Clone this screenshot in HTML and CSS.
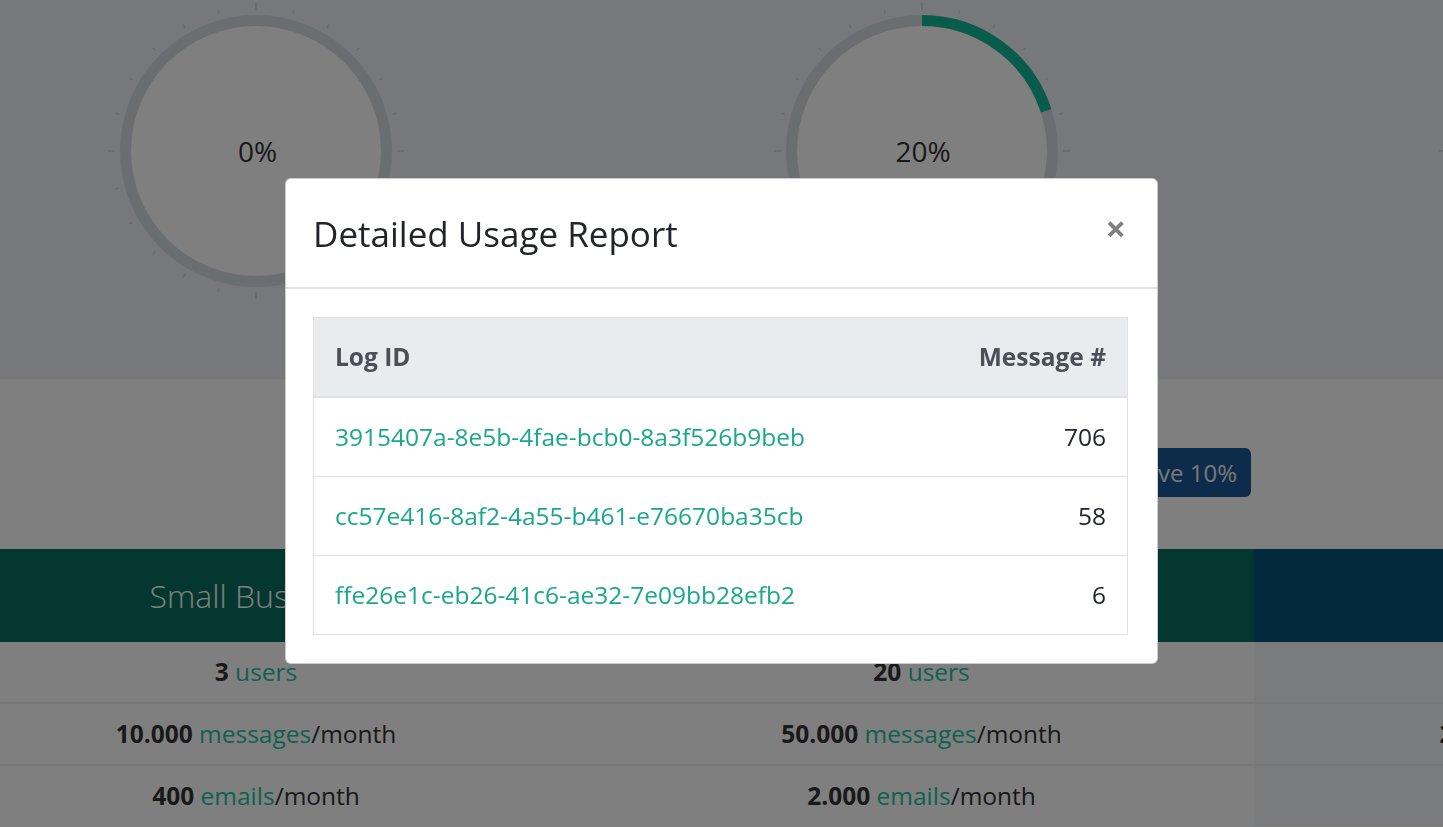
FILE: index.html
```html
<!DOCTYPE html>
<html lang="en">
<head>
<meta charset="utf-8">
<title>Usage</title>
<link rel="stylesheet" href="styles.css">
</head>
<body>
<div class="page">
  <section class="usage">
    <div class="cols">
      <div class="gauge">
        <svg class="gauge-svg" width="302" height="302" viewBox="0 0 302 302">
          <g class="ticks">
            <line class="major" x1="151" y1="3" x2="151" y2="10"/>
            <line x1="151" y1="5" x2="151" y2="9" transform="rotate(15 151 151)"/>
            <line x1="151" y1="5" x2="151" y2="9" transform="rotate(30 151 151)"/>
            <line x1="151" y1="5" x2="151" y2="9" transform="rotate(45 151 151)"/>
            <line x1="151" y1="5" x2="151" y2="9" transform="rotate(60 151 151)"/>
            <line x1="151" y1="5" x2="151" y2="9" transform="rotate(75 151 151)"/>
            <line class="major" x1="151" y1="3" x2="151" y2="10" transform="rotate(90 151 151)"/>
            <line x1="151" y1="5" x2="151" y2="9" transform="rotate(105 151 151)"/>
            <line x1="151" y1="5" x2="151" y2="9" transform="rotate(120 151 151)"/>
            <line x1="151" y1="5" x2="151" y2="9" transform="rotate(135 151 151)"/>
            <line x1="151" y1="5" x2="151" y2="9" transform="rotate(150 151 151)"/>
            <line x1="151" y1="5" x2="151" y2="9" transform="rotate(165 151 151)"/>
            <line class="major" x1="151" y1="3" x2="151" y2="10" transform="rotate(180 151 151)"/>
            <line x1="151" y1="5" x2="151" y2="9" transform="rotate(195 151 151)"/>
            <line x1="151" y1="5" x2="151" y2="9" transform="rotate(210 151 151)"/>
            <line x1="151" y1="5" x2="151" y2="9" transform="rotate(225 151 151)"/>
            <line x1="151" y1="5" x2="151" y2="9" transform="rotate(240 151 151)"/>
            <line x1="151" y1="5" x2="151" y2="9" transform="rotate(255 151 151)"/>
            <line class="major" x1="151" y1="3" x2="151" y2="10" transform="rotate(270 151 151)"/>
            <line x1="151" y1="5" x2="151" y2="9" transform="rotate(285 151 151)"/>
            <line x1="151" y1="5" x2="151" y2="9" transform="rotate(300 151 151)"/>
            <line x1="151" y1="5" x2="151" y2="9" transform="rotate(315 151 151)"/>
            <line x1="151" y1="5" x2="151" y2="9" transform="rotate(330 151 151)"/>
            <line x1="151" y1="5" x2="151" y2="9" transform="rotate(345 151 151)"/>
          </g>
          <circle class="face" cx="151" cy="151" r="125"/>
          <circle class="ring" cx="151" cy="151" r="130.5"/>
        </svg>
        <div class="gauge-value">0%</div>
      </div>
      <div class="gauge">
        <svg class="gauge-svg" width="302" height="302" viewBox="0 0 302 302">
          <g class="ticks">
            <line class="major" x1="151" y1="3" x2="151" y2="10"/>
            <line x1="151" y1="5" x2="151" y2="9" transform="rotate(15 151 151)"/>
            <line x1="151" y1="5" x2="151" y2="9" transform="rotate(30 151 151)"/>
            <line x1="151" y1="5" x2="151" y2="9" transform="rotate(45 151 151)"/>
            <line x1="151" y1="5" x2="151" y2="9" transform="rotate(60 151 151)"/>
            <line x1="151" y1="5" x2="151" y2="9" transform="rotate(75 151 151)"/>
            <line class="major" x1="151" y1="3" x2="151" y2="10" transform="rotate(90 151 151)"/>
            <line x1="151" y1="5" x2="151" y2="9" transform="rotate(105 151 151)"/>
            <line x1="151" y1="5" x2="151" y2="9" transform="rotate(120 151 151)"/>
            <line x1="151" y1="5" x2="151" y2="9" transform="rotate(135 151 151)"/>
            <line x1="151" y1="5" x2="151" y2="9" transform="rotate(150 151 151)"/>
            <line x1="151" y1="5" x2="151" y2="9" transform="rotate(165 151 151)"/>
            <line class="major" x1="151" y1="3" x2="151" y2="10" transform="rotate(180 151 151)"/>
            <line x1="151" y1="5" x2="151" y2="9" transform="rotate(195 151 151)"/>
            <line x1="151" y1="5" x2="151" y2="9" transform="rotate(210 151 151)"/>
            <line x1="151" y1="5" x2="151" y2="9" transform="rotate(225 151 151)"/>
            <line x1="151" y1="5" x2="151" y2="9" transform="rotate(240 151 151)"/>
            <line x1="151" y1="5" x2="151" y2="9" transform="rotate(255 151 151)"/>
            <line class="major" x1="151" y1="3" x2="151" y2="10" transform="rotate(270 151 151)"/>
            <line x1="151" y1="5" x2="151" y2="9" transform="rotate(285 151 151)"/>
            <line x1="151" y1="5" x2="151" y2="9" transform="rotate(300 151 151)"/>
            <line x1="151" y1="5" x2="151" y2="9" transform="rotate(315 151 151)"/>
            <line x1="151" y1="5" x2="151" y2="9" transform="rotate(330 151 151)"/>
            <line x1="151" y1="5" x2="151" y2="9" transform="rotate(345 151 151)"/>
          </g>
          <circle class="face" cx="151" cy="151" r="125"/>
          <circle class="ring" cx="151" cy="151" r="130.5"/>
          <circle class="arc" cx="151" cy="151" r="130.5" stroke-dasharray="164 820" transform="rotate(-90 151 151)"/>
        </svg>
        <div class="gauge-value">20%</div>
      </div>
      <div class="gauge">
        <svg class="gauge-svg" width="302" height="302" viewBox="0 0 302 302">
          <g class="ticks">
            <line class="major" x1="151" y1="3" x2="151" y2="10" transform="rotate(270 151 151)"/>
          </g>
          <circle class="face" cx="151" cy="151" r="125"/>
          <circle class="ring" cx="151" cy="151" r="130.5"/>
        </svg>
      </div>
    </div>
  </section>

  <section class="billing">
    <span class="billing-label">Pay yearly</span>
    <span class="badge">Save 10%</span>
  </section>

  <section class="plans">
    <div class="cols">
      <div class="plan-head green">Small Business</div>
      <div class="plan-head green">Business</div>
      <div class="plan-head navy"></div>

      <div class="cell"><span><b>3</b> <a href="#">users</a></span></div>
      <div class="cell"><span><b>20</b> <a href="#">users</a></span></div>
      <div class="cell alt"></div>

      <div class="cell sep"><span><b>10.000</b> <a href="#">messages</a>/month</span></div>
      <div class="cell sep"><span><b>50.000</b> <a href="#">messages</a>/month</span></div>
      <div class="cell sep alt"><span><b>250.000</b> <a href="#">messages</a>/month</span></div>

      <div class="cell sep"><span><b>400</b> <a href="#">emails</a>/month</span></div>
      <div class="cell sep"><span><b>2.000</b> <a href="#">emails</a>/month</span></div>
      <div class="cell sep alt"></div>
    </div>
  </section>
</div>

<div class="backdrop"></div>
<div class="modal">
  <div class="dialog">
    <div class="modal-header">
      <h4 class="modal-title">Detailed Usage Report</h4>
      <button class="close" type="button">×</button>
    </div>
    <div class="modal-body">
      <table class="report">
        <thead>
          <tr><th>Log ID</th><th class="num">Message #</th></tr>
        </thead>
        <tbody>
          <tr><td><a href="#">3915407a-8e5b-4fae-bcb0-8a3f526b9beb</a></td><td class="num">706</td></tr>
          <tr><td><a href="#">cc57e416-8af2-4a55-b461-e76670ba35cb</a></td><td class="num">58</td></tr>
          <tr><td><a href="#">ffe26e1c-eb26-41c6-ae32-7e09bb28efb2</a></td><td class="num">6</td></tr>
        </tbody>
      </table>
    </div>
  </div>
</div>
</body>
</html>
```

FILE: styles.css
```css
* { box-sizing: border-box; margin: 0; padding: 0; }
html, body { width: 100%; height: 100%; }
body {
  font-family: "Open Sans", "Liberation Sans", sans-serif;
  color: #333;
  background: #fff;
  overflow: hidden;
}
a { text-decoration: none; }

.cols {
  display: grid;
  grid-template-columns: 666px 665px 666px;
  margin-left: -77px;
}

/* usage gauges */
.usage {
  height: 379px;
  background: #eef0f6;
}
.gauge {
  display: grid;
  place-items: center;
  height: 302px;
}
.gauge > * { grid-area: 1 / 1; }
.gauge-svg { display: block; }
.ticks line { stroke: #d3d6dc; stroke-width: 1.3; }
.ticks line.major { stroke-width: 1.8; }
.face { fill: #fff; }
.ring { fill: none; stroke: #d6dce2; stroke-width: 11; }
.arc { fill: none; stroke: #12b997; stroke-width: 11; }
.gauge-value {
  font-size: 28px;
  color: #333;
  line-height: 1;
  padding-left: 3px;
}

/* billing row */
.billing {
  height: 170px;
  display: flex;
  align-items: center;
  justify-content: flex-end;
  gap: 16px;
  padding: 17px 192px 0 0;
  background: #fff;
}
.billing-label { font-size: 24px; color: #333; }
.badge {
  display: inline-block;
  background: #1a5694;
  color: #f0f0f0;
  font-size: 24px;
  line-height: 33px;
  padding: 8px 14px;
  border-radius: 6px;
}

/* plans table */
.plan-head {
  height: 93px;
  display: flex;
  align-items: center;
  justify-content: center;
  font-size: 32px;
  font-weight: 300;
  color: #fff;
}
.green { background: #086e5e; }
.navy { background: #065478; }
.cell {
  height: 60px;
  display: flex;
  align-items: center;
  justify-content: center;
  white-space: nowrap;
  font-size: 24.5px;
  color: #333;
  background: #fff;
  padding-bottom: 1px;
}
.cell.sep { height: 62px; border-top: 2px solid #ececec; }
.cell.alt { background: #f4f6fb; }
.cell b { font-weight: 700; color: #333; }
.cell a { color: #1cc2a3; }

/* modal */
.backdrop {
  position: fixed;
  inset: 0;
  background: rgba(0, 0, 0, 0.5);
}
.modal {
  position: fixed;
  inset: 0;
  padding-top: 178px;
}
.dialog {
  width: 873px;
  margin: 0 auto;
  background: #fff;
  border: 1px solid rgba(0, 0, 0, 0.2);
  border-radius: 6px;
}
.modal-header {
  display: flex;
  justify-content: space-between;
  align-items: flex-start;
  padding: 29px 28px 27px 27px;
  border-bottom: 2px solid #dee2e6;
}
.modal-title {
  font-size: 35px;
  line-height: 52px;
  font-weight: 400;
  color: #212529;
}
.close {
  background: none;
  border: 0;
  font-family: "Open Sans", sans-serif;
  font-size: 36px;
  line-height: 36px;
  font-weight: 700;
  color: #000;
  opacity: 0.5;
  margin-top: 3px;
  margin-right: 3px;
}
.modal-body { padding: 28px 29px 28px 27px; }
.report {
  width: 100%;
  border-collapse: collapse;
  border: 1px solid #dee2e6;
  font-size: 24.5px;
  line-height: 36px;
  color: #212529;
}
.report th, .report td {
  padding: 21px;
  text-align: left;
}
.report th {
  background: #e9ecef;
  color: #495057;
  font-weight: 700;
  border-bottom: 2px solid #dee2e6;
}
.report td { border-top: 1px solid #dee2e6; }
.report .num { text-align: right; }
.report a { color: #19a88b; }
```
